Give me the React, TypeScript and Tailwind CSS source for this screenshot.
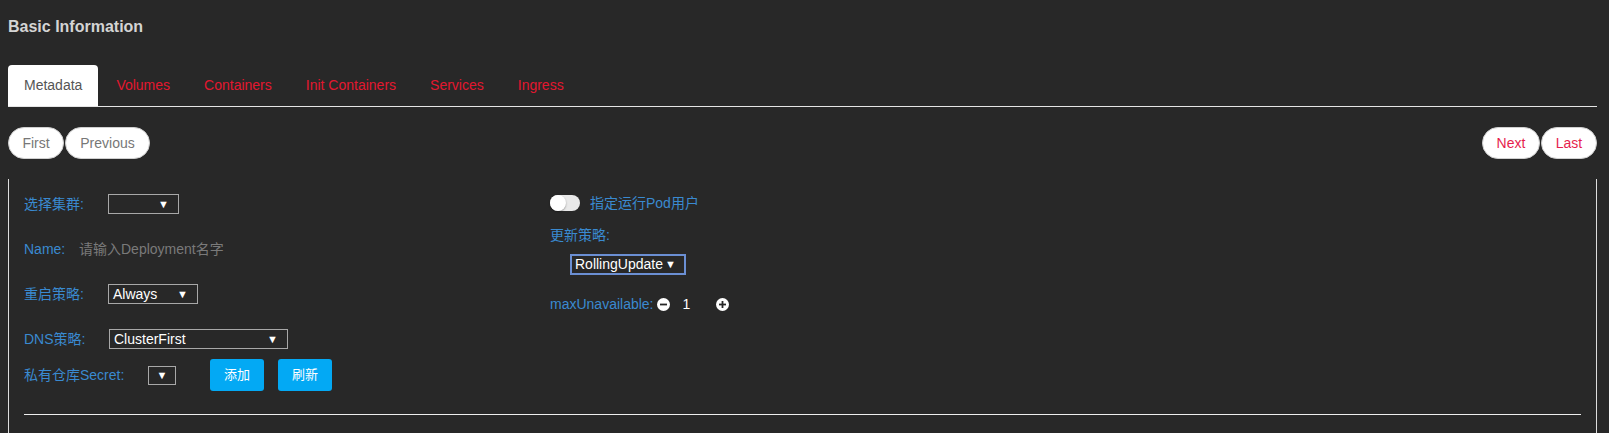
import { useState } from 'react';

const tabs = ['Metadata', 'Volumes', 'Containers', 'Init Containers', 'Services', 'Ingress'];

function Select({ value, className }: { value?: string; className: string }) {
  return (
    <div className={`flex items-center justify-between border border-[#a8a8a8] pl-[4px] pr-[9px] text-[14px] text-white ${className}`}>
      <span className="leading-none">{value}</span>
      <span className="text-[11px] leading-none">▼</span>
    </div>
  );
}

function RoundIcon({ sign }: { sign: '-' | '+' }) {
  return (
    <svg width="13" height="13" viewBox="0 0 13 13">
      <circle cx="6.5" cy="6.5" r="6.5" fill="#fff" />
      <rect x="3" y="5.6" width="7" height="1.8" fill="#282828" />
      {sign === '+' && <rect x="5.6" y="3" width="1.8" height="7" fill="#282828" />}
    </svg>
  );
}

export default function App() {
  const [active, setActive] = useState(0);
  const [maxUnavailable, setMaxUnavailable] = useState(1);

  return (
    <div
      className="h-screen overflow-hidden bg-[#282828] pl-2 pr-3"
      style={{ fontFamily: '"Liberation Sans", "Noto Sans CJK SC", sans-serif' }}
    >
      <h3 className="pt-[17px] text-[16px] font-bold leading-[20px] text-[#d4d4d4]">Basic Information</h3>

      {/* Tabs */}
      <div className="mt-[28px] flex h-[42px] border-b border-[#e5e5e5]">
        {tabs.map((t, i) => (
          <button
            key={t}
            onClick={() => setActive(i)}
            className={`mr-[2px] flex h-[41px] items-center rounded-t-[4px] px-[16px] text-[14px] ${
              active === i ? 'bg-white text-[#555]' : 'text-[#e3172f]'
            }`}
          >
            {t}
          </button>
        ))}
      </div>

      {/* Pager */}
      <div className="mt-[20px] flex h-[32px] justify-between text-[14px]">
        <div className="flex">
          <button className="h-[32px] w-[56px] rounded-full border border-[#d0d0d0] bg-white text-[#777]">First</button>
          <button className="ml-[1px] h-[32px] w-[85px] rounded-full border border-[#d0d0d0] bg-white text-[#777]">Previous</button>
        </div>
        <div className="flex">
          <button className="h-[32px] w-[58px] rounded-full border border-[#d0d0d0] bg-white text-[#e61e4d]">Next</button>
          <button className="ml-[1px] h-[32px] w-[56px] rounded-full border border-[#d0d0d0] bg-white text-[#e61e4d]">Last</button>
        </div>
      </div>

      {/* Form panel */}
      <div className="mt-[20px] h-[400px] border-x border-[#dddddd] pl-[15px] pr-[15px] pt-[10px] text-[14px] text-[#3a8ad0]">
        <div className="flex">
          <div className="w-[526px]">
            <div className="flex h-[30px] items-center">
              <span className="w-[84px]">选择集群:</span>
              <Select className="h-[20px] w-[71px]" />
            </div>
            <div className="mt-[15px] flex h-[30px] items-center">
              <span className="w-[55px]">Name:</span>
              <span className="text-[#7a7a7a]">请输入Deployment名字</span>
            </div>
            <div className="mt-[15px] flex h-[30px] items-center">
              <span className="w-[84px]">重启策略:</span>
              <Select value="Always" className="h-[20px] w-[90px]" />
            </div>
            <div className="mt-[15px] flex h-[30px] items-center">
              <span className="w-[85px]">DNS策略:</span>
              <Select value="ClusterFirst" className="h-[20px] w-[179px]" />
            </div>
            <div className="mt-[5px] flex h-[32px] items-center">
              <span className="w-[124px]">私有仓库Secret:</span>
              <div className="flex h-[19px] w-[28px] items-center justify-center border border-[#a8a8a8] text-[11px] text-white">▼</div>
              <button className="ml-[34px] h-[32px] w-[54px] rounded-[3px] bg-[#03a9f4] text-[13px] text-white">添加</button>
              <button className="ml-[14px] h-[32px] w-[54px] rounded-[3px] bg-[#03a9f4] text-[13px] text-white">刷新</button>
            </div>
          </div>

          <div>
            <div className="mt-[4px] flex h-[20px] items-center">
              <div className="h-[16px] w-[30px] rounded-full bg-[#e9e9e9]">
                <div className="h-[16px] w-[16px] rounded-full bg-white shadow-[0_1px_2px_rgba(0,0,0,0.35)]" />
              </div>
              <span className="ml-[10px]">指定运行Pod用户</span>
            </div>
            <div className="mt-[12px] flex h-[20px] items-center">更新策略:</div>
            <div className="mt-[9px] flex h-[20px] items-center">
              <div className="ml-[20px] flex h-[21px] w-[116px] items-center justify-between border-2 border-[#6b8fd3] pl-[3px] pr-[8px] text-white">
                <span className="leading-none">RollingUpdate</span>
                <span className="text-[11px] leading-none">▼</span>
              </div>
            </div>
            <div className="mt-[20px] flex h-[20px] items-center">
              <span>maxUnavailable:</span>
              <button className="ml-[3px] flex" onClick={() => setMaxUnavailable(Math.max(0, maxUnavailable - 1))}>
                <RoundIcon sign="-" />
              </button>
              <span className="ml-[13px] w-[8px] text-white">{maxUnavailable}</span>
              <button className="ml-[25px] flex" onClick={() => setMaxUnavailable(maxUnavailable + 1)}>
                <RoundIcon sign="+" />
              </button>
            </div>
          </div>
        </div>
        <div className="mt-[23px] border-t border-[#eeeeee]" />
      </div>
    </div>
  );
}
